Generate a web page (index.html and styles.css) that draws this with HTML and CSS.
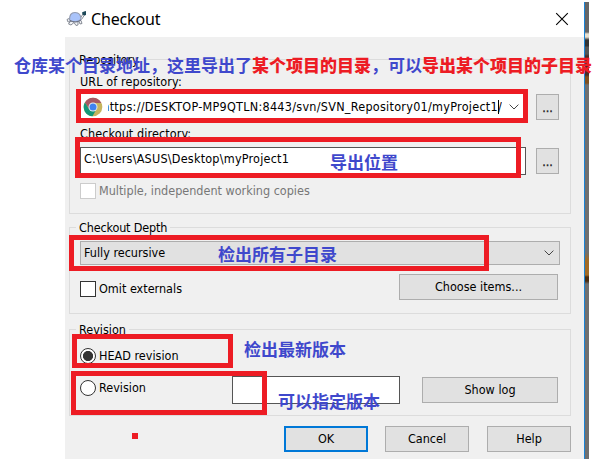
FILE: index.html
```
<!DOCTYPE html>
<html lang="zh-CN">
<head>
<meta charset="utf-8">
<title>Checkout</title>
<link rel="stylesheet" href="styles.css">
</head>
<body>
<div class="desktop">
  <main class="window">
    <header class="titlebar">
      <svg class="turtle" width="21" height="17" viewBox="0 0 21 17" fill="none" stroke="#7c818c" stroke-width=".9">
        <path d="M4 8 1 9.500 2 12 5 11.500M4.500 11 2.500 14 5 15 8 12.500M8 12.500 10 15.500 12 15 12 12M13 11.500 14 14 16 13.500 15 10.500" fill="#f2f3f5"/>
        <path d="M14.500 8 17 4M15.500 9.500 18.500 5"/>
        <path d="M3.500 10C3.500 5 5 2.500 9 2.500c4 0 6 3 6 7-3 2.800-8 3-11.500.5Z" fill="#a9c3fa" stroke="#939bb0" stroke-width="1.200"/>
        <path d="M4 10.500c3 2 8 2 11-.5" stroke="#60677a"/>
        <path d="M16 2.500 18 1.500 20 1v4L18 5.500 16.500 4.500Z" fill="#1e4958" stroke="none"/>
      </svg>
      <h1>Checkout</h1>
      <svg class="close" width="14" height="14" viewBox="0 0 14 14" stroke="#000" stroke-width="1.1"><path d="M1.200 1.200 12.800 12.800M12.800 1.200 1.200 12.800"/></svg>
    </header>
    <form class="body">
      <section class="group repository">
        <h2>Repository</h2>
        <div class="label">URL of repository:</div>
        <div class="row url-row">
          <div class="url-box">
            <svg class="chrome" width="20" height="20" viewBox="0 0 20 20">
              <circle cx="10" cy="10" r="9.300" fill="#c6b45e"/>
              <path d="M1.900 5.400A9.300 9.300 0 0 1 18.100 5.400L18.400 6H10L6.300 12Z" fill="#a75762"/>
              <path d="M1.900 5.400A9.300 9.300 0 0 0 9.500 19.300L13.600 12 10 14 6 12Z" fill="#139777"/>
              <circle cx="10" cy="10" r="4.500" fill="#e8eef0"/>
              <circle cx="10" cy="10" r="3.500" fill="#3f82f0"/>
            </svg>
            <div class="url-text"><span>https://DESKTOP-MP9QTLN:8443/svn/SVN_Repository01/myProject1<i class="caret"></i>/</span></div>
            <svg class="chevron" width="10" height="6" viewBox="0 0 10 6"><path d="M.6.6 5 5 9.400.6" fill="none" stroke="#444"/></svg>
          </div>
          <div class="button browse">...</div>
        </div>
        <div class="label dir-label">Checkout directory:</div>
        <div class="row dir-row">
          <div class="field dir-field">C:\Users\ASUS\Desktop\myProject1</div>
          <div class="button browse">...</div>
        </div>
        <div class="option disabled"><i class="check"></i><span>Multiple, independent working copies</span></div>
      </section>
      <section class="group depth">
        <h2>Checkout Depth</h2>
        <div class="select"><span>Fully recursive</span>
          <svg width="10" height="6" viewBox="0 0 10 6"><path d="M.6.6 5 5 9.400.6" fill="none" stroke="#444"/></svg>
        </div>
        <div class="row depth-row">
          <div class="option"><i class="check"></i><span>Omit externals</span></div>
          <div class="button choose">Choose items...</div>
        </div>
      </section>
      <section class="group revision">
        <h2>Revision</h2>
        <div class="option head"><i class="radio selected"></i><span>HEAD revision</span></div>
        <div class="row rev-row">
          <div class="option"><i class="radio"></i><span>Revision</span></div>
          <div class="field rev-field"></div>
          <div class="button log">Show log</div>
        </div>
      </section>
      <footer class="actions">
        <div class="button primary">OK</div>
        <div class="button cancel">Cancel</div>
        <div class="button">Help</div>
      </footer>
    </form>
  </main>
  <div class="backdrop"></div>

  <div class="mark mark-url"></div>
  <div class="mark mark-dir"></div>
  <div class="mark mark-depth"></div>
  <div class="mark mark-head"></div>
  <div class="mark mark-rev"></div>
  <div class="dot"></div>
  <p class="note note-url">仓库某个目录地址，这里导出了<b>某个项目的目录</b>，可以<b>导出某个项目的子目录</b></p>
  <p class="note note-dir">导出位置</p>
  <p class="note note-depth">检出所有子目录</p>
  <p class="note note-head">检出最新版本</p>
  <p class="note note-rev">可以指定版本</p>
</div>
</body>
</html>
```
FILE: styles.css
```
* { box-sizing: border-box; }
body { margin: 0; background: #fff; }
h1, h2, p { margin: 0; font-weight: normal; }

.desktop {
  position: relative;
  display: flex;
  width: 602px;
  height: 467px;
  overflow: hidden;
  padding: 2px 0 8px 65px;
  font: 12.5px/16px "DejaVu Sans Condensed", "DejaVu Sans", sans-serif;
  font-stretch: condensed;
  color: #000;
  white-space: nowrap;
}
.window { width: 519px; }
.backdrop {
  width: 5px;
  border-left: 1px solid #1883d7;
  background: linear-gradient(#666 0 30px, #e8e0d0 32px 35px, #333 38px 44px, #555 45px 52px, #4a2e26 54px 73px, #80501f 75px 81px, #707070 83px 250px, #a16a25 258px 273px, #4a2c10 275px 279px, #707070 282px);
}

.titlebar { display: flex; align-items: center; height: 35px; padding: 0 15px 2px 1px; }
.titlebar h1 { margin-left: 4px; font: 16px/22px "Noto Sans", sans-serif; font-stretch: normal; letter-spacing: -.15px; }
.turtle { margin-top: -1px; }
.close { margin-left: auto; }

.body { height: 422px; padding: 22px 13px 0 4px; background: #f0f0f0; }
.group { height: 87px; border: 1px solid #dcdcdc; padding: 0 10px; }
.group h2 { width: max-content; height: 16px; margin: -8px 0 0 -4px; padding: 0 3px; background: #f0f0f0; font-size: inherit; line-height: 16px; }
.repository { height: 155px; }
.depth { margin-top: 13px; }
.depth h2 { letter-spacing: -.15px; }
.revision { margin-top: 15px; }
.row { display: flex; align-items: center; }
.label { height: 16px; margin-top: 6px; letter-spacing: .1px; }
.url-row { height: 26px; margin-top: 4px; justify-content: space-between; }
.url-box { display: flex; align-items: center; width: 446px; height: 26px; padding: 0 7px 0 3px; background: #fff; }
.url-text { display: flex; justify-content: flex-end; width: 394px; overflow: hidden; margin-left: 5px; letter-spacing: .27px; }
.caret { display: inline-block; width: 1px; height: 14px; margin-right: -1px; background: #000; vertical-align: -3px; }
.chevron { margin-left: auto; }
.button {
  display: flex;
  align-items: center;
  justify-content: center;
  height: 26px;
  border: 1px solid #adadad;
  background: #e1e1e1;
}
.browse { width: 23px; color: #222; -webkit-text-stroke: .3px #222; padding-top: 2px; }
.dir-row { height: 28px; margin-top: 5px; justify-content: space-between; }
.field { height: 28px; border: 1px solid #555; background: #fff; }
.dir-field { width: 446px; padding: 3px 0 0 3px; letter-spacing: .22px; }
.row .browse { margin-right: 1px; }
.option { display: flex; align-items: center; height: 16px; gap: 3px; }
.disabled { margin-top: 8px; color: #777; }
.check, .radio { width: 16px; height: 16px; border: 1px solid #333; background: #fff; }
.disabled .check { border-color: #ccc; }
.radio { border-radius: 50%; }
.selected { background: radial-gradient(circle, #333 4.700px, #fff 5.400px); }

.select { display: flex; align-items: center; justify-content: space-between; width: 480px; height: 24px; margin-top: 5px; padding: 0 5px 0 3px; border: 1px solid #adadad; background: #e1e1e1; }
.depth-row { height: 26px; margin-top: 9px; justify-content: space-between; }
.choose { width: 159px; margin-right: 2px; }
.depth-row .option { margin-top: 4px; }

.head { margin-top: 10px; }
.rev-row { height: 28px; margin-top: 12px; }
.rev-row .option { width: 152px; margin-top: -4px; }
.rev-field { width: 168px; }
.log { width: 136px; margin-left: 22px; }

.actions { display: flex; gap: 17px; justify-content: flex-end; margin-top: 10px; }
.actions .button { width: 84px; }
.actions .primary { border: 2px solid #0078d7; }
.actions .cancel { margin-right: 1px; }

.mark { position: absolute; border: 5px solid #ed1c24; }
.mark-url { left: 76px; top: 89px; width: 452px; height: 34px; }
.mark-dir { left: 75px; top: 137px; width: 446px; height: 41px; }
.mark-depth { left: 69px; top: 235px; width: 420px; height: 36px; }
.mark-head { left: 72px; top: 334px; width: 161px; height: 34px; }
.mark-rev { left: 71px; top: 371px; width: 196px; height: 44px; }
.dot { position: absolute; left: 132px; top: 433px; width: 6px; height: 6px; background: #ed1c24; }

.note { position: absolute; font: bold 17px/24px "Noto Sans CJK SC", sans-serif; color: #3f48cc; }
.note b { color: #ed1c24; }
.note-url { left: 14px; top: 53px; }
.note-dir { left: 330px; top: 150px; }
.note-depth { left: 218px; top: 242px; }
.note-head { left: 244px; top: 337px; }
.note-rev { left: 278px; top: 389px; }
```
